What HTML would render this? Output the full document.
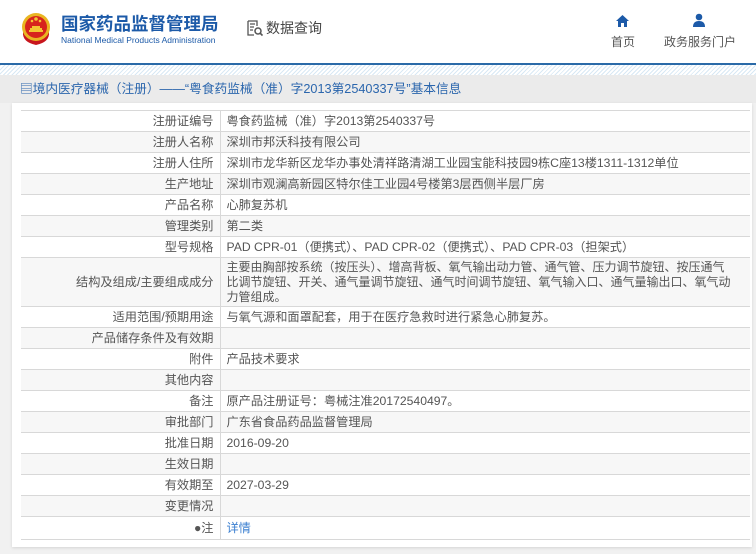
<!DOCTYPE html>
<html><head><meta charset="utf-8"><style>
*{margin:0;padding:0;box-sizing:border-box}
body{width:756px;height:554px;background:#fff;font-family:"Liberation Sans","Noto Sans CJK SC",sans-serif;position:relative;overflow:hidden}
.hdr{position:absolute;left:0;top:0;width:756px;height:63px;background:#fff}
.line{position:absolute;left:0;top:63px;width:756px;height:2px;background:#2a6aa8}
.hatch{position:absolute;left:0;top:65px;width:756px;height:10px;background:repeating-linear-gradient(135deg,#d8e8f4 0 1px,#fff 1px 3px)}
.bg{position:absolute;left:0;top:75px;width:756px;height:479px;background:#f1f1f1}
.bar{position:absolute;left:0;top:75px;width:756px;height:28px;background:#ebebeb;color:#2b66ad;font-size:12.7px;line-height:28px;padding-left:20px}
.panel{position:absolute;left:12px;top:103px;width:740px;height:444px;background:#fff;box-shadow:0 1px 3px rgba(0,0,0,.12)}
table{position:absolute;left:21px;top:110px;width:729px;border-collapse:collapse;font-size:12.2px;color:#555;table-layout:fixed}
td{border:1px solid #d8d8d8;height:21px;line-height:14px;padding:0 6px;vertical-align:middle;white-space:nowrap;overflow:hidden}
td.l{width:199px;text-align:right;padding-right:6px}
tr:nth-child(even) td{background:#f7f7f7}
td{border-left:none;border-right:none}
td.l{border-right:1px solid #d8d8d8}
</style></head><body>
<div class="hdr">
<svg style="position:absolute;left:20px;top:12px" width="32" height="34" viewBox="0 0 32 34">
<path d="M3 20 Q2 30 16 33 Q30 30 29 20 Z" fill="#c8161d"/>
<circle cx="16" cy="15" r="14" fill="#e9b521"/>
<circle cx="16" cy="15" r="11" fill="#d7241d"/>
<path d="M9 18h14v2H9zM10 16h12v2H10zM12 14h8v2h-8z" fill="#f3c632"/>
<circle cx="12" cy="9" r="1.3" fill="#f3c632"/><circle cx="16" cy="7" r="1.8" fill="#f3c632"/><circle cx="20" cy="9" r="1.3" fill="#f3c632"/>
</svg>
<div style="position:absolute;left:61px;top:11px;font-size:17.5px;font-weight:bold;color:#1c5aa8">国家药品监督管理局</div>
<div style="position:absolute;left:61px;top:35px;font-size:8.5px;color:#1c5aa8">National Medical Products Administration</div>
<svg style="position:absolute;left:247px;top:20px" width="16" height="17" viewBox="0 0 16 17"><path d="M1 1h9v5M1 1v14h6M3 4h5M3 7h4M3 10h3" stroke="#555" stroke-width="1.3" fill="none"/><circle cx="11" cy="11" r="3" stroke="#555" stroke-width="1.5" fill="none"/><path d="M13 13l2.5 2.5" stroke="#555" stroke-width="1.6"/></svg>
<div style="position:absolute;left:266px;top:18px;font-size:14px;color:#444">数据查询</div>
<svg style="position:absolute;left:616px;top:15px" width="13" height="12" viewBox="0 0 13 12"><path d="M6.5 0L13 6h-2v6H8V8H5v4H2V6H0z" fill="#1c5aa8"/></svg>
<div style="position:absolute;left:611px;top:33px;font-size:12px;color:#555">首页</div>
<svg style="position:absolute;left:692px;top:13px" width="14" height="14" viewBox="0 0 14 14"><circle cx="7" cy="4" r="3.3" fill="#1c5aa8"/><path d="M1 14Q1 8 7 8Q13 8 13 14Z" fill="#1c5aa8"/></svg>
<div style="position:absolute;left:664px;top:33px;font-size:12px;color:#555">政务服务门户</div>
</div>
<div class="line"></div><div class="hatch"></div><div class="bg"></div>
<div class="bar">▤境内医疗器械（注册）——“粤食药监械（准）字2013第2540337号”基本信息</div>
<div class="panel"></div>
<table>
<tr><td class="l">注册证编号</td><td>粤食药监械（准）字2013第2540337号</td></tr>
<tr><td class="l">注册人名称</td><td>深圳市邦沃科技有限公司</td></tr>
<tr><td class="l">注册人住所</td><td>深圳市龙华新区龙华办事处清祥路清湖工业园宝能科技园9栋C座13楼1311-1312单位</td></tr>
<tr><td class="l">生产地址</td><td>深圳市观澜高新园区特尔佳工业园4号楼第3层西侧半层厂房</td></tr>
<tr><td class="l">产品名称</td><td>心肺复苏机</td></tr>
<tr><td class="l">管理类别</td><td>第二类</td></tr>
<tr><td class="l">型号规格</td><td>PAD CPR-01（便携式）、PAD CPR-02（便携式）、PAD CPR-03（担架式）</td></tr>
<tr><td class="l" style="height:49px">结构及组成/主要组成成分</td><td style="line-height:15px;font-size:12px">主要由胸部按系统（按压头）、增高背板、氧气输出动力管、通气管、压力调节旋钮、按压通气<br>比调节旋钮、开关、通气量调节旋钮、通气时间调节旋钮、氧气输入口、通气量输出口、氧气动<br>力管组成。</td></tr>
<tr><td class="l">适用范围/预期用途</td><td>与氧气源和面罩配套，用于在医疗急救时进行紧急心肺复苏。</td></tr>
<tr><td class="l">产品储存条件及有效期</td><td></td></tr>
<tr><td class="l">附件</td><td>产品技术要求</td></tr>
<tr><td class="l">其他内容</td><td></td></tr>
<tr><td class="l">备注</td><td>原产品注册证号：粤械注准20172540497。</td></tr>
<tr><td class="l">审批部门</td><td>广东省食品药品监督管理局</td></tr>
<tr><td class="l">批准日期</td><td>2016-09-20</td></tr>
<tr><td class="l">生效日期</td><td></td></tr>
<tr><td class="l">有效期至</td><td>2027-03-29</td></tr>
<tr><td class="l">变更情况</td><td></td></tr>
<tr><td class="l" style="height:23px;background:#fff">●注</td><td style="color:#3b7fd0;background:#fff">详情</td></tr>
</table>
</body></html>
